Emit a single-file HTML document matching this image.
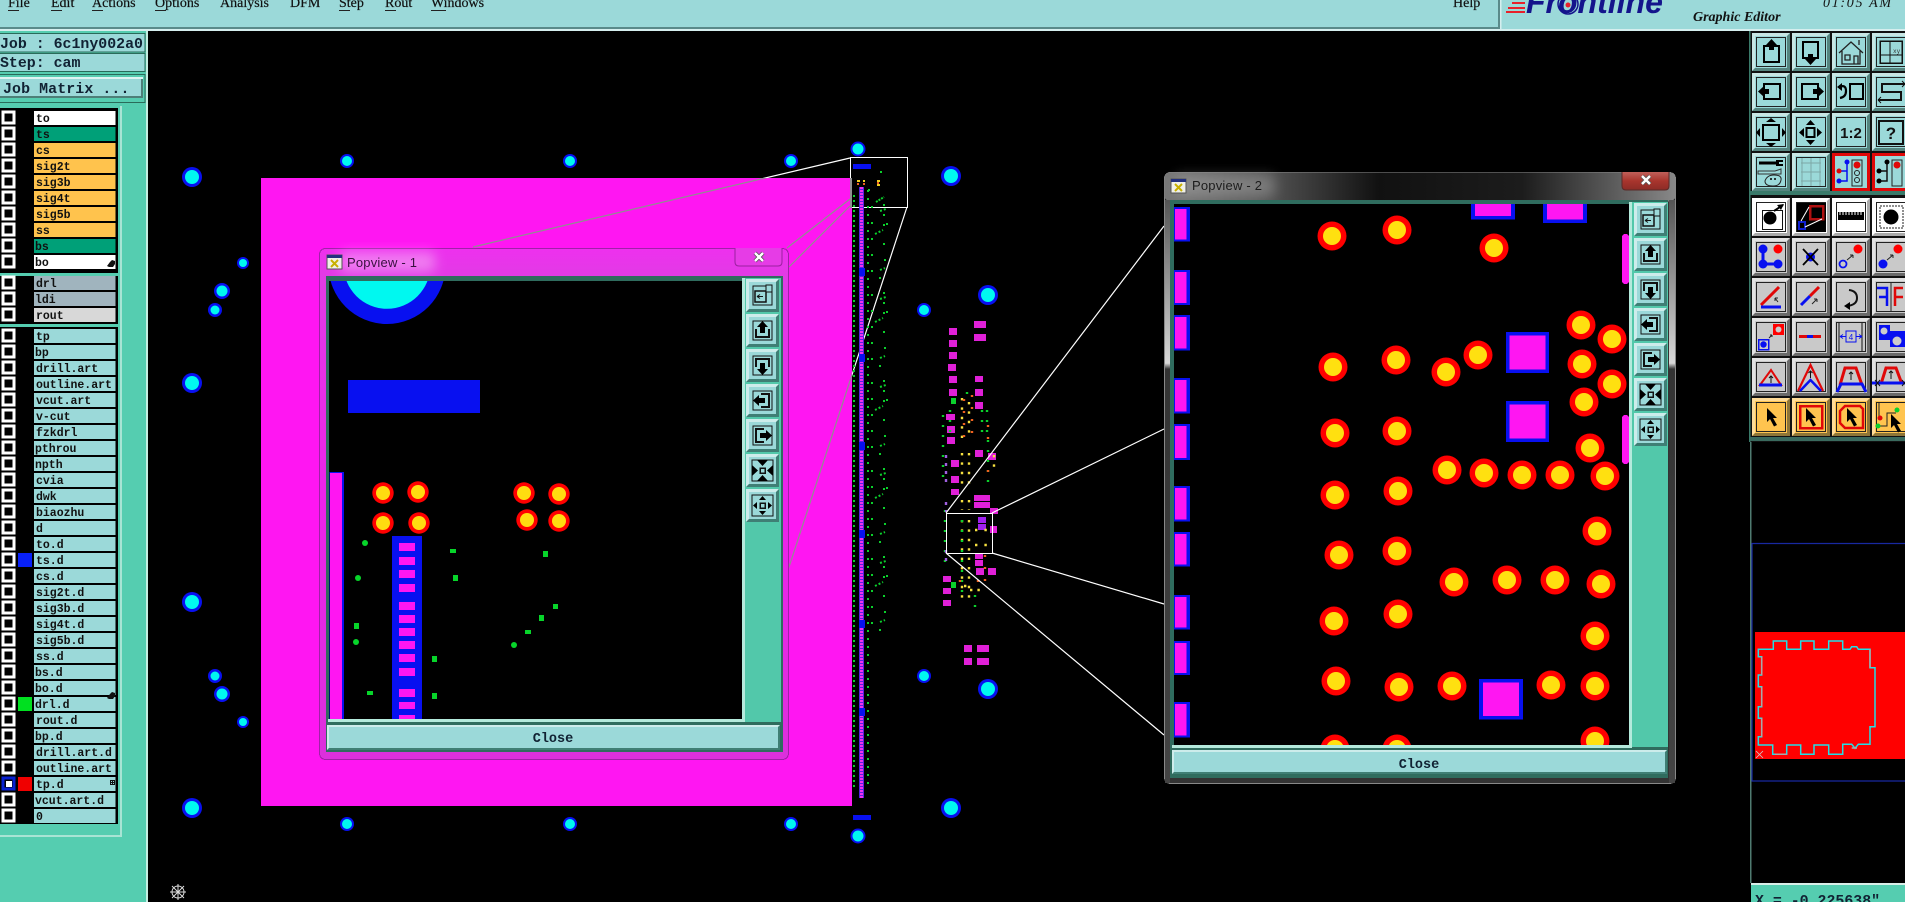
<!DOCTYPE html>
<html><head><meta charset="utf-8"><title>Frontline Graphic Editor</title>
<style>
html,body{margin:0;padding:0;background:#000;width:1905px;height:902px;overflow:hidden}
svg{display:block;position:absolute;left:0;top:0}
.m{font:bold 11.5px "Liberation Mono",monospace;fill:#111}
.j{font:bold 14.9px "Liberation Mono",monospace;fill:#123}
.s{font:14px "Liberation Serif",serif;fill:#111;stroke:#111;stroke-width:.2}
.t{font:13px "Liberation Sans",sans-serif;letter-spacing:.2px}
rect{shape-rendering:crispEdges}
</style></head><body>
<svg width="1905" height="902" viewBox="0 0 1905 902" xmlns="http://www.w3.org/2000/svg">
<defs>
<linearGradient id="gp" x1="0" y1="0" x2="0" y2="1"><stop offset="0" stop-color="#ee30ee"/><stop offset=".06" stop-color="#e03ce4"/><stop offset=".5" stop-color="#ec22ea"/><stop offset="1" stop-color="#dc30dc"/></linearGradient>
<linearGradient id="gd" x1="0" y1="0" x2="1" y2="0"><stop offset="0" stop-color="#777"/><stop offset=".18" stop-color="#5a5a5a"/><stop offset=".42" stop-color="#111"/><stop offset=".7" stop-color="#1c1c1c"/><stop offset=".92" stop-color="#6a6a6a"/><stop offset="1" stop-color="#888"/></linearGradient>
<linearGradient id="gs" x1="0" y1="0" x2="0" y2="1"><stop offset="0" stop-color="#555"/><stop offset=".28" stop-color="#d8d8d8"/><stop offset=".29" stop-color="#333"/><stop offset="1" stop-color="#444"/></linearGradient>
<linearGradient id="gr" x1="0" y1="0" x2="0" y2="1"><stop offset="0" stop-color="#c0605a"/><stop offset=".5" stop-color="#a8352d"/><stop offset="1" stop-color="#8c2c26"/></linearGradient>
<filter id="bl" x="-20%" y="-50%" width="140%" height="200%"><feGaussianBlur stdDeviation="6"/></filter>
<clipPath id="cp1"><rect x="329" y="281" width="413" height="438"/></clipPath>
<clipPath id="cp2"><rect x="1174" y="204" width="455" height="541"/></clipPath>
<clipPath id="cpk"><rect x="261" y="178" width="591" height="628"/></clipPath>
<g id="p1"><circle r="10.7" fill="#f00"/><circle r="7" fill="#ffdc10"/></g>
<g id="p2"><circle r="14.5" fill="#f00"/><circle r="9" fill="#ffe010"/></g>
<g id="bv"><path fill="#c8e6e4" d="M0 0H38L35 3H3V35L0 38Z"/><path fill="#55857f" d="M38 38H0L3 35H35V3L38 0Z"/><rect x="4.5" y="4.5" width="29" height="29" fill="none" stroke="#222"/></g>
<g id="Bt"><rect width="38" height="38" fill="#9bd9d9"/><use href="#bv"/></g>
<g id="Bg"><rect width="38" height="38" fill="#c9c9c9"/><path fill="#e2e2e2" d="M0 0H38L35 3H3V35L0 38Z"/><path fill="#6a6a6a" d="M38 38H0L3 35H35V3L38 0Z"/><rect x="4.5" y="4.5" width="29" height="29" fill="none" stroke="#222"/></g>
<g id="Bw"><rect width="38" height="38" fill="#fff"/><path fill="#aaa" d="M38 38H0L3 35H35V3L38 0Z"/><rect x="4.5" y="4.5" width="29" height="29" fill="none" stroke="#222"/></g>
<g id="Bo"><rect width="38" height="38" fill="#ffc44f"/><path fill="#ffdc98" d="M0 0H38L35 3H3V35L0 38Z"/><path fill="#8f7638" d="M38 38H0L3 35H35V3L38 0Z"/><rect x="4.5" y="4.5" width="29" height="29" fill="none" stroke="#222"/></g>
<path id="ar" d="M0 0L10 10H6L10 17L7 18.500L3 11L0 14Z" fill="#000"/>
<g id="Pb"><rect width="33" height="33" fill="#9bd9d9"/><path fill="#cdeceb" d="M0 0H33L30 3H3V30L0 33Z"/><path fill="#3f7f75" d="M33 33H0L3 30H30V3L33 0Z"/></g>
<g id="pu"><rect x="7" y="7" width="19" height="19" fill="none" stroke="#111"/><path d="M10 15v8h13v-8" fill="none" stroke="#111" stroke-width="2"/><path d="M16.500 7L22 13H19V19H14V13H11Z" fill="#000"/></g>
<g id="pbs">
<use href="#Pb"/><g><rect x="7" y="7" width="19" height="19" fill="none" stroke="#111"/><path d="M9 12h11v11H9z" fill="none" stroke="#111" stroke-width="1.500"/><path d="M20 6h6v7h-6z" fill="#9bd9d9" stroke="#111"/><path d="M11 17.500h6M11 17.500l3-2M11 17.500l3 2" stroke="#111" fill="none"/></g>
<g transform="translate(0 35)"><use href="#Pb"/><use href="#pu"/></g>
<g transform="translate(0 70)"><use href="#Pb"/><use href="#pu" transform="rotate(180 16.500 16.500)"/></g>
<g transform="translate(0 105)"><use href="#Pb"/><use href="#pu" transform="rotate(-90 16.500 16.500)"/></g>
<g transform="translate(0 140)"><use href="#Pb"/><use href="#pu" transform="rotate(90 16.500 16.500)"/></g>
<g transform="translate(0 175)"><use href="#Pb"/><rect x="6" y="6" width="21" height="21" fill="none" stroke="#111"/><rect x="14" y="14" width="5" height="5" fill="none" stroke="#111" stroke-width="1.500"/><path d="M11 6H22L16.500 12ZM11 27H22L16.500 21ZM6 11V22L12 16.500ZM27 11V22L21 16.500Z" fill="#000"/></g>
<g transform="translate(0 210)"><use href="#Pb"/><rect x="6" y="6" width="21" height="21" fill="none" stroke="#111"/><rect x="14" y="14" width="5" height="5" fill="none" stroke="#111" stroke-width="1.500"/><path d="M16.500 7L20 11H13ZM16.500 26L20 22H13ZM7 16.500L11 13V20ZM26 16.500L22 13V20Z" fill="#000"/></g>
</g>
<g id="tile" fill="none" stroke="#0bd02c" stroke-width="2">
<path stroke-dasharray="2 2" d="M875 34l8-4M880 11l6-2M880 70l5-2"/>
<path stroke-dasharray="2 8" d="M884 4v26"/>
<path stroke-dasharray="2 14" d="M872 6v80"/>
<path d="M883 44h2M884 60h2M879 78h2M886 24h2"/>
</g>
</defs>

<!-- canvas -->
<rect width="1905" height="902" fill="#000"/>

<!-- zoom rect 1 + lines (white parts, over black) -->
<g fill="none" stroke="#fff" stroke-width="1.200">
<rect x="850.500" y="157.500" width="57" height="50"/>
<path d="M850 158L473 247M850 199L787 248M850 206L789 267M907 207L788 570"/>
</g>
<rect x="261" y="178" width="591" height="628" fill="#ff16f2"/>
<g fill="none" stroke="#8f8f8f" stroke-width="1.200" clip-path="url(#cpk)"><path d="M850 158L473 247M850 199L787 248M850 206L789 267M907 207L788 570"/></g>
<rect x="850" y="178" width="2" height="30" fill="#8f8f8f"/>

<!-- drill pads -->
<g fill="#0810f0">
<circle cx="192" cy="177" r="10"/><circle cx="192" cy="383" r="10"/><circle cx="192" cy="602" r="10"/><circle cx="192" cy="808" r="10"/><circle cx="951" cy="176" r="10"/><circle cx="988" cy="295" r="10"/><circle cx="988" cy="689" r="10"/><circle cx="951" cy="808" r="10"/>
<circle cx="347" cy="161" r="7"/><circle cx="570" cy="161" r="7"/><circle cx="791" cy="161" r="7"/><circle cx="858" cy="149" r="7.500"/><circle cx="858" cy="836" r="7.500"/><circle cx="347" cy="824" r="7"/><circle cx="570" cy="824" r="7"/><circle cx="791" cy="824" r="7"/>
<circle cx="222" cy="291" r="8"/><circle cx="215" cy="310" r="7"/><circle cx="243" cy="263" r="6"/><circle cx="215" cy="676" r="7"/><circle cx="222" cy="694" r="8"/><circle cx="243" cy="722" r="6"/><circle cx="924" cy="310" r="7"/><circle cx="924" cy="676" r="7"/>
</g>
<g fill="#00f8f0">
<circle cx="192" cy="177" r="7"/><circle cx="192" cy="383" r="7"/><circle cx="192" cy="602" r="7"/><circle cx="192" cy="808" r="7"/><circle cx="951" cy="176" r="7"/><circle cx="988" cy="295" r="7"/><circle cx="988" cy="689" r="7"/><circle cx="951" cy="808" r="7"/>
<circle cx="347" cy="161" r="5"/><circle cx="570" cy="161" r="5"/><circle cx="791" cy="161" r="5"/><circle cx="858" cy="149" r="5.500"/><circle cx="858" cy="836" r="5.500"/><circle cx="347" cy="824" r="5"/><circle cx="570" cy="824" r="5"/><circle cx="791" cy="824" r="5"/>
<circle cx="222" cy="291" r="5.500"/><circle cx="215" cy="310" r="4.500"/><circle cx="243" cy="263" r="4"/><circle cx="215" cy="676" r="4.500"/><circle cx="222" cy="694" r="5.500"/><circle cx="243" cy="722" r="4"/><circle cx="924" cy="310" r="5"/><circle cx="924" cy="676" r="5"/>
</g>

<!-- strip -->
<rect x="853" y="164" width="18" height="5" fill="#0810f0"/><rect x="853" y="815" width="18" height="5" fill="#0810f0"/>
<rect x="859" y="187" width="5" height="611" fill="#5a20e0"/>
<line x1="861.500" y1="187" x2="861.500" y2="798" stroke="#f030f0" stroke-width="3" stroke-dasharray="2 1"/>
<g fill="#0810f0"><rect x="859" y="268" width="6" height="8"/><rect x="859" y="354" width="6" height="8"/><rect x="859" y="442" width="6" height="8"/><rect x="859" y="530" width="6" height="8"/><rect x="859" y="620" width="6" height="8"/><rect x="859" y="708" width="6" height="8"/></g>
<g fill="none" stroke-width="2">
<path stroke="#0bd02c" stroke-dasharray="2 3" d="M854 195V790"/>
<path stroke="#0bd02c" stroke-dasharray="2 6" d="M868 190V790"/>
<path stroke="#f0d020" stroke-dasharray="3 3" d="M857 181h8M877 181h6M877 185h6"/>
<path stroke="#f06020" stroke-dasharray="2 4" d="M857 184h8M877 183h6"/>
</g>
<g fill="none" stroke="#0bd02c" stroke-width="2"><path stroke-dasharray="2 1" d="M876 202l8-5"/><path d="M880 172h2M868 190h2"/></g>
<use href="#tile" y="200"/><use href="#tile" y="288"/><use href="#tile" y="376"/><use href="#tile" y="464"/><use href="#tile" y="552"/>

<!-- center cluster -->
<g fill="#e020d8">
<rect x="949" y="328" width="8" height="7"/><rect x="949" y="340" width="8" height="7"/><rect x="949" y="352" width="8" height="7"/><rect x="948" y="364" width="8" height="7"/><rect x="949" y="376" width="8" height="7"/><rect x="949" y="389" width="8" height="7"/><rect x="946" y="414" width="9" height="6"/><rect x="947" y="426" width="8" height="7"/><rect x="947" y="437" width="8" height="7"/><rect x="951" y="460" width="8" height="7"/><rect x="951" y="476" width="8" height="7"/><rect x="951" y="489" width="8" height="6"/><rect x="975" y="376" width="8" height="6"/><rect x="975" y="389" width="8" height="7"/><rect x="975" y="402" width="8" height="7"/><rect x="975" y="450" width="8" height="7"/><rect x="988" y="453" width="8" height="7"/><rect x="974" y="495" width="8" height="6"/><rect x="982" y="495" width="8" height="6"/><rect x="974" y="502" width="8" height="6"/><rect x="982" y="502" width="8" height="6"/><rect x="990" y="508" width="8" height="6"/><rect x="990" y="526" width="7" height="7"/><rect x="975" y="553" width="8" height="6"/><rect x="975" y="560" width="8" height="6"/><rect x="976" y="568" width="8" height="7"/><rect x="988" y="568" width="8" height="7"/><rect x="943" y="576" width="8" height="6"/><rect x="943" y="588" width="8" height="6"/><rect x="943" y="600" width="8" height="6"/>
<rect x="974" y="321" width="12" height="7"/><rect x="974" y="334" width="12" height="7"/><rect x="964" y="645" width="8" height="7"/><rect x="977" y="645" width="12" height="7"/><rect x="964" y="658" width="8" height="7"/><rect x="977" y="658" width="12" height="7"/>
</g>
<rect x="978" y="517" width="8" height="6" fill="#a020f0"/><rect x="978" y="524" width="8" height="6" fill="#a020f0"/>
<rect x="951" y="398" width="5" height="6" fill="#0bd02c"/><rect x="951" y="582" width="5" height="6" fill="#0bd02c"/>
<g fill="none" stroke-width="2.400">
<path stroke="#f6e040" stroke-dasharray="2.400 7" d="M962 398V438M969 402V438M962 453V486M969 453V486M962 500V510M969 500V510M962 520V600M969 520V600M994 455V470M975 530h16M975 545h16"/>
<path stroke="#0bd02c" stroke-dasharray="2 8" d="M943 415V480M945 510V570M950 410V435M967 392V400M982 410V440M987 410V440M988 440V482M975 595V612M962 520V595"/>
<path stroke="#a060e0" stroke-dasharray="3 5" d="M946 455V482M946 502V512M946 550V565"/>
<path stroke="#f06020" stroke-dasharray="2 10" d="M964 399V440M972 395V440M988 425V445M988 470V476M960 580V590M978 580V590M985 555V590"/>
<path stroke="#f6e040" stroke-dasharray="2.400 5" d="M970 590h14M964 586h6"/>
</g>
<g fill="none" stroke="#fff" stroke-width="1.200">
<rect x="946.500" y="513.500" width="46" height="40"/>
<path d="M946 513L1164 226M992 513L1164 429M992 553L1164 604M946 553L1164 735"/>
</g>

<!-- crosshair -->
<g fill="none" stroke="#ddd"><circle cx="178" cy="892" r="6"/><path d="M170 892h16M178 884v16M172 886l12 12M184 886l-12 12"/></g>

<!-- top bar -->
<rect width="1905" height="31" fill="#9bd9d9"/>
<rect y="27" width="1500" height="2" fill="#5a8a8a"/><rect y="29" width="1905" height="2" fill="#d5eeee"/>
<rect x="1498" y="0" width="2" height="28" fill="#5a8a8a"/><rect x="1500" y="0" width="1.500" height="30" fill="#d5eeee"/>
<text class="s" x="8" y="7">File</text><text class="s" x="51" y="7">Edit</text><text class="s" x="92" y="7">Actions</text><text class="s" x="155" y="7">Options</text><text class="s" x="220" y="7">Analysis</text><text class="s" x="290" y="7">DFM</text><text class="s" x="339" y="7">Step</text><text class="s" x="385" y="7">Rout</text><text class="s" x="431" y="7">Windows</text><text class="s" x="1453" y="7">Help</text>
<g fill="#222"><rect x="8" y="10" width="11" height="1"/><rect x="51" y="10" width="11" height="1"/><rect x="92" y="10" width="11" height="1"/><rect x="155" y="10" width="11" height="1"/><rect x="339" y="10" width="11" height="1"/><rect x="385" y="10" width="11" height="1"/><rect x="431" y="10" width="15" height="1"/></g>
<!-- logo -->
<g fill="#e8202a"><rect x="1512" y="2" width="13" height="2"/><rect x="1508" y="7" width="17" height="2"/><rect x="1506" y="11" width="19" height="2"/></g>
<text x="1526" y="13" style="font:italic bold 32px 'Liberation Sans',sans-serif;fill:#14148c">Frontline</text>
<circle cx="1568" cy="4" r="10" fill="none" stroke="#14148c" stroke-width="1.500"/>
<circle cx="1568" cy="5" r="2.500" fill="#e8202a"/>
<text x="1693" y="21" style="font:italic bold 14px 'Liberation Serif',serif;fill:#111">Graphic Editor</text>
<text x="1823" y="7" style="font:italic 14px 'Liberation Serif',serif;letter-spacing:1.700px;fill:#111">01:05 AM</text>

<!-- left panel -->
<rect y="31" width="146" height="871" fill="#55cdb0"/><rect x="146" y="31" width="2" height="871" fill="#c4eee2"/>
<rect x="-2" y="33.500" width="147" height="18.500" fill="#9bd9d9" stroke="#2a6b5a"/>
<rect x="-2" y="53.500" width="147" height="18" fill="#9bd9d9" stroke="#2a6b5a"/>
<text class="j" x="0" y="48">Job : 6c1ny002a0</text>
<text class="j" x="0" y="67">Step: cam</text>
<rect x="-2" y="74.500" width="147" height="28" fill="#55cdb0" stroke="#2a6b5a"/>
<rect x="0" y="77" width="143" height="21" fill="#9bd9d9"/><path d="M0 77H143V79H0Z" fill="#dff5f3"/><path d="M0 96H141V79H143V98H0Z" fill="#4d7f78"/>
<text class="j" x="3" y="93" style="letter-spacing:.1px">Job Matrix ...</text>
<rect x="120" y="106" width="2" height="730" fill="#a8e4d4"/><rect x="0" y="835" width="122" height="2" fill="#a8e4d4"/>
<rect x="0" y="108" width="118" height="165" fill="#000"/><rect x="0" y="276" width="118" height="48" fill="#000"/><rect x="0" y="327" width="118" height="497" fill="#000"/>

<g id="rows">
<rect x="34" y="111" width="81.500" height="14" fill="#fff"/><text class="m" x="36" y="122">to</text>
<rect x="34" y="127" width="81.500" height="14" fill="#00a078"/><text class="m" x="36" y="138">ts</text>
<rect x="34" y="143" width="81.500" height="14" fill="#ffc34d"/><text class="m" x="36" y="154">cs</text>
<rect x="34" y="159" width="81.500" height="14" fill="#ffc34d"/><text class="m" x="36" y="170">sig2t</text>
<rect x="34" y="175" width="81.500" height="14" fill="#ffc34d"/><text class="m" x="36" y="186">sig3b</text>
<rect x="34" y="191" width="81.500" height="14" fill="#ffc34d"/><text class="m" x="36" y="202">sig4t</text>
<rect x="34" y="207" width="81.500" height="14" fill="#ffc34d"/><text class="m" x="36" y="218">sig5b</text>
<rect x="34" y="223" width="81.500" height="14" fill="#ffc34d"/><text class="m" x="36" y="234">ss</text>
<rect x="34" y="239" width="81.500" height="14" fill="#00a078"/><text class="m" x="35" y="250">bs</text>
<rect x="34" y="255" width="81.500" height="14" fill="#fff"/><text class="m" x="35" y="266">bo</text>
<rect x="34" y="276" width="81.500" height="14" fill="#a0b4be"/><text class="m" x="36" y="287">drl</text>
<rect x="34" y="292" width="81.500" height="14" fill="#a0b4be"/><text class="m" x="35" y="303">ldi</text>
<rect x="34" y="308" width="81.500" height="14" fill="#d8d8d8"/><text class="m" x="36" y="319">rout</text>
</g>
<g fill="#9bd9d9">
<rect x="34" y="329" width="81.500" height="14"/><rect x="34" y="345" width="81.500" height="14"/><rect x="34" y="361" width="81.500" height="14"/><rect x="34" y="377" width="81.500" height="14"/><rect x="34" y="393" width="81.500" height="14"/><rect x="34" y="409" width="81.500" height="14"/><rect x="34" y="425" width="81.500" height="14"/><rect x="34" y="441" width="81.500" height="14"/><rect x="34" y="457" width="81.500" height="14"/><rect x="34" y="473" width="81.500" height="14"/><rect x="34" y="489" width="81.500" height="14"/><rect x="34" y="505" width="81.500" height="14"/><rect x="34" y="521" width="81.500" height="14"/><rect x="34" y="537" width="81.500" height="14"/><rect x="34" y="553" width="81.500" height="14"/><rect x="34" y="569" width="81.500" height="14"/><rect x="34" y="585" width="81.500" height="14"/><rect x="34" y="601" width="81.500" height="14"/><rect x="34" y="617" width="81.500" height="14"/><rect x="34" y="633" width="81.500" height="14"/><rect x="34" y="649" width="81.500" height="14"/><rect x="34" y="665" width="81.500" height="14"/><rect x="34" y="681" width="81.500" height="14"/><rect x="34" y="697" width="81.500" height="14"/><rect x="34" y="713" width="81.500" height="14"/><rect x="34" y="729" width="81.500" height="14"/><rect x="34" y="745" width="81.500" height="14"/><rect x="34" y="761" width="81.500" height="14"/><rect x="34" y="777" width="81.500" height="14"/><rect x="34" y="793" width="81.500" height="14"/><rect x="34" y="809" width="81.500" height="14"/>
</g>
<g>
<text class="m" x="36" y="340">tp</text><text class="m" x="35" y="356">bp</text><text class="m" x="36" y="372">drill.art</text><text class="m" x="36" y="388">outline.art</text><text class="m" x="36" y="404">vcut.art</text><text class="m" x="36" y="420">v-cut</text><text class="m" x="36" y="436">fzkdrl</text><text class="m" x="35" y="452">pthrou</text><text class="m" x="35" y="468">npth</text><text class="m" x="36" y="484">cvia</text><text class="m" x="36" y="500">dwk</text><text class="m" x="36" y="516">biaozhu</text><text class="m" x="36" y="532">d</text><text class="m" x="36" y="548">to.d</text><text class="m" x="36" y="564">ts.d</text><text class="m" x="36" y="580">cs.d</text><text class="m" x="36" y="596">sig2t.d</text><text class="m" x="36" y="612">sig3b.d</text><text class="m" x="36" y="628">sig4t.d</text><text class="m" x="36" y="644">sig5b.d</text><text class="m" x="36" y="660">ss.d</text><text class="m" x="35" y="676">bs.d</text><text class="m" x="35" y="692">bo.d</text><text class="m" x="35" y="708">drl.d</text><text class="m" x="36" y="724">rout.d</text><text class="m" x="35" y="740">bp.d</text><text class="m" x="36" y="756">drill.art.d</text><text class="m" x="36" y="772">outline.art</text><text class="m" x="36" y="788">tp.d</text><text class="m" x="35" y="804">vcut.art.d</text><text class="m" x="36" y="820">0</text>
</g>
<rect x="18" y="553" width="14" height="14" fill="#0820f8"/><rect x="18" y="697" width="14" height="14" fill="#00e020"/><rect x="18" y="777" width="14" height="14" fill="#f00000"/>
<path d="M107 266l3-4 2-2 3 1v3l-2 3h-4z" fill="#111"/><path d="M107 698l3-4 2-2 3 1v3l-2 3h-4z" fill="#111"/>
<g fill="none" stroke="#111"><rect x="110.500" y="780.500" width="4" height="4"/><path d="M112.500 780v4M110 782.500h4"/></g>
<!-- checkboxes -->
<g fill="none" stroke="#fff" stroke-width="2.600">
<rect x="3" y="112" width="11" height="11"/><rect x="3" y="128" width="11" height="11"/><rect x="3" y="144" width="11" height="11"/><rect x="3" y="160" width="11" height="11"/><rect x="3" y="176" width="11" height="11"/><rect x="3" y="192" width="11" height="11"/><rect x="3" y="208" width="11" height="11"/><rect x="3" y="224" width="11" height="11"/><rect x="3" y="240" width="11" height="11"/><rect x="3" y="256" width="11" height="11"/>
<rect x="3" y="277" width="11" height="11"/><rect x="3" y="293" width="11" height="11"/><rect x="3" y="309" width="11" height="11"/>
<rect x="3" y="330" width="11" height="11"/><rect x="3" y="346" width="11" height="11"/><rect x="3" y="362" width="11" height="11"/><rect x="3" y="378" width="11" height="11"/><rect x="3" y="394" width="11" height="11"/><rect x="3" y="410" width="11" height="11"/><rect x="3" y="426" width="11" height="11"/><rect x="3" y="442" width="11" height="11"/><rect x="3" y="458" width="11" height="11"/><rect x="3" y="474" width="11" height="11"/><rect x="3" y="490" width="11" height="11"/><rect x="3" y="506" width="11" height="11"/><rect x="3" y="522" width="11" height="11"/><rect x="3" y="538" width="11" height="11"/><rect x="3" y="554" width="11" height="11"/><rect x="3" y="570" width="11" height="11"/><rect x="3" y="586" width="11" height="11"/><rect x="3" y="602" width="11" height="11"/><rect x="3" y="618" width="11" height="11"/><rect x="3" y="634" width="11" height="11"/><rect x="3" y="650" width="11" height="11"/><rect x="3" y="666" width="11" height="11"/><rect x="3" y="682" width="11" height="11"/><rect x="3" y="698" width="11" height="11"/><rect x="3" y="714" width="11" height="11"/><rect x="3" y="730" width="11" height="11"/><rect x="3" y="746" width="11" height="11"/><rect x="3" y="762" width="11" height="11"/><rect x="3" y="794" width="11" height="11"/><rect x="3" y="810" width="11" height="11"/>
</g>
<rect x="3" y="778" width="11" height="11" fill="#000" stroke="#0820d0" stroke-width="2.600"/><rect x="6" y="781" width="6" height="6" fill="#fff"/>

<!-- POPUP 1 -->
<rect x="319.500" y="248.500" width="469" height="511" rx="6" fill="url(#gp)" stroke="#a020a8"/>
<rect x="340" y="252" width="95" height="20" fill="#fff" opacity=".35" filter="url(#bl)" rx="5"/>
<path d="M735 248V262q0 4 4 4h39q4 0 4-4V248" fill="#e63ce6" stroke="#9a20a0"/>
<path d="M755 253l8 8M763 253l-8 8" stroke="#555" stroke-width="4"/><path d="M755 253l8 8M763 253l-8 8" stroke="#fff" stroke-width="2.400"/>
<g><rect x="327" y="255" width="15" height="14" fill="#f0f0e8" stroke="#555"/><rect x="327" y="255" width="15" height="3" fill="#223080"/><path d="M331 260l7 7M338 260l-7 7" stroke="#c8b000" stroke-width="2"/></g>
<text class="t" x="347" y="267" fill="#3a1040">Popview - 1</text>
<rect x="326" y="276" width="457" height="476" fill="#2f6c5e"/>
<rect x="329" y="281" width="413" height="438" fill="#000"/>
<rect x="742" y="278" width="3" height="444" fill="#b4eadc"/>
<rect x="328" y="719" width="417" height="3" fill="#b4eadc"/>
<rect x="745" y="278" width="36" height="444" fill="#52c8aa"/>
<use href="#pbs" x="746" y="279"/>
<rect x="327" y="725" width="453" height="25" fill="#9bd9d9"/><path d="M327 725H780L778 727H329V748L327 750Z" fill="#cdeceb"/><path d="M780 750H327L329 748H778V727L780 725Z" fill="#3f7f75"/>
<text class="j" x="553" y="742" text-anchor="middle" style="font-size:13.500px">Close</text>
<g clip-path="url(#cp1)">
<circle cx="387" cy="265.500" r="58.500" fill="#0810f0"/><circle cx="387" cy="265.500" r="43.300" fill="#00f8f0"/>
<rect x="348" y="380" width="132" height="33" fill="#0810f0"/>
<rect x="329.500" y="472" width="14.500" height="247" fill="#0810f0"/><rect x="330" y="473" width="12" height="246" fill="#ff16f2"/>
<use href="#p1" x="383" y="493"/><use href="#p1" x="418" y="492"/><use href="#p1" x="383" y="523"/><use href="#p1" x="419" y="523"/><use href="#p1" x="524" y="493"/><use href="#p1" x="559" y="494"/><use href="#p1" x="527" y="520"/><use href="#p1" x="559" y="521"/>
<rect x="392" y="536" width="30" height="183" fill="#0810f0"/>
<g fill="#ff16f2"><rect x="399" y="543" width="16" height="8"/><rect x="399" y="557" width="16" height="8"/><rect x="399" y="570" width="16" height="8"/><rect x="399" y="584" width="16" height="8"/><rect x="399" y="602" width="16" height="8"/><rect x="399" y="615" width="16" height="8"/><rect x="399" y="628" width="16" height="8"/><rect x="399" y="641" width="16" height="8"/><rect x="399" y="654" width="16" height="8"/><rect x="399" y="668" width="16" height="8"/><rect x="399" y="689" width="16" height="8"/><rect x="399" y="702" width="16" height="7"/><rect x="399" y="715" width="16" height="5"/></g>
<g fill="#07d52a"><circle cx="365" cy="543" r="3"/><circle cx="358" cy="578" r="3"/><circle cx="356" cy="642" r="3"/><circle cx="514" cy="645" r="3"/><rect x="354" y="623" width="5" height="6"/><rect x="367" y="691" width="6" height="4"/><rect x="450" y="549" width="6" height="4"/><rect x="453" y="575" width="5" height="6"/><rect x="432" y="656" width="5" height="6"/><rect x="432" y="693" width="5" height="6"/><rect x="543" y="551" width="5" height="6"/><rect x="553" y="604" width="5" height="5"/><rect x="539" y="615" width="5" height="6"/><rect x="525" y="630" width="6" height="4"/></g>
</g>

<!-- POPUP 2 -->
<rect x="1164.500" y="172.500" width="511" height="611" rx="6" fill="#333" stroke="#888"/>
<rect x="1164.500" y="172.500" width="511" height="29" rx="6" fill="url(#gd)"/>
<rect x="1165" y="200" width="5" height="583" fill="url(#gs)"/><rect x="1669" y="200" width="6" height="583" fill="url(#gs)"/>
<rect x="1175" y="175" width="100" height="22" fill="#ccc" opacity=".3" filter="url(#bl)" rx="6"/>
<path d="M1622 172V186q0 4 4 4h39q4 0 4-4V172" fill="url(#gr)" stroke="#5a2a28"/>
<path d="M1642 176l8 8M1650 176l-8 8" stroke="#555" stroke-width="4"/><path d="M1642 176l8 8M1650 176l-8 8" stroke="#fff" stroke-width="2.400"/>
<g><rect x="1171" y="179" width="15" height="14" fill="#f0f0e8" stroke="#555"/><rect x="1171" y="179" width="15" height="3" fill="#223080"/><path d="M1175 184l7 7M1182 184l-7 7" stroke="#c8b000" stroke-width="2"/></g>
<text class="t" x="1192" y="190" fill="#1c1c1c">Popview - 2</text>
<rect x="1170" y="200" width="498" height="578" fill="#2f6c5e"/>
<rect x="1174" y="204" width="455" height="541" fill="#000"/>
<rect x="1629" y="202" width="3" height="545" fill="#b4eadc"/>
<rect x="1172" y="745" width="460" height="3" fill="#b4eadc"/>
<rect x="1632" y="202" width="36" height="545" fill="#52c8aa"/>
<use href="#pbs" x="1634" y="203"/>
<rect x="1172" y="750" width="495" height="24" fill="#9bd9d9"/><path d="M1172 750H1667L1665 752H1174V772L1172 774Z" fill="#cdeceb"/><path d="M1667 774H1172L1174 772H1665V752L1667 750Z" fill="#3f7f75"/>
<text class="j" x="1419" y="768" text-anchor="middle" style="font-size:13.500px">Close</text>
<g clip-path="url(#cp2)">
<g fill="#0810f0"><rect x="1174" y="207" width="16" height="34.500"/><rect x="1174" y="270" width="16" height="35"/><rect x="1174" y="315" width="16" height="35.500"/><rect x="1174" y="378" width="16" height="35.500"/><rect x="1174" y="424" width="16" height="36"/><rect x="1174" y="486" width="16" height="35.500"/><rect x="1174" y="532" width="16" height="34.500"/><rect x="1174" y="595" width="16" height="34.500"/><rect x="1174" y="641" width="16" height="34"/><rect x="1174" y="702" width="16" height="35.500"/><rect x="1471" y="204" width="44" height="15.500"/><rect x="1543" y="204" width="44" height="19"/><rect x="1506" y="332" width="43" height="41"/><rect x="1506" y="401" width="43" height="41"/><rect x="1479" y="679" width="44" height="40.500"/></g>
<g fill="#ff16f2"><rect x="1175" y="209" width="11.500" height="30.500"/><rect x="1175" y="272" width="11.500" height="31"/><rect x="1175" y="317" width="11.500" height="31.500"/><rect x="1175" y="380" width="11.500" height="31.500"/><rect x="1175" y="426" width="11.500" height="32"/><rect x="1175" y="488" width="11.500" height="31.500"/><rect x="1175" y="534" width="11.500" height="30.500"/><rect x="1175" y="597" width="11.500" height="30.500"/><rect x="1175" y="643" width="11.500" height="30"/><rect x="1175" y="704" width="11.500" height="31.500"/><rect x="1475" y="204" width="36" height="12"/><rect x="1547" y="204" width="36" height="15.500"/><rect x="1509.500" y="335.500" width="36" height="34"/><rect x="1509.500" y="404.500" width="36" height="34"/><rect x="1483" y="682.500" width="36" height="33.500"/></g>
<rect x="1622" y="234" width="7" height="50" rx="3" fill="#ff16f2"/><rect x="1622" y="415" width="7" height="49" rx="3" fill="#ff16f2"/>
<use href="#p2" x="1332" y="236"/><use href="#p2" x="1397" y="230"/><use href="#p2" x="1494" y="248"/><use href="#p2" x="1581" y="325"/><use href="#p2" x="1612" y="339"/><use href="#p2" x="1582" y="364"/><use href="#p2" x="1612" y="384"/><use href="#p2" x="1478" y="355"/><use href="#p2" x="1446" y="372"/><use href="#p2" x="1396" y="360"/><use href="#p2" x="1333" y="367"/><use href="#p2" x="1584" y="402"/><use href="#p2" x="1335" y="433"/><use href="#p2" x="1397" y="431"/><use href="#p2" x="1590" y="448"/><use href="#p2" x="1447" y="470"/><use href="#p2" x="1484" y="473"/><use href="#p2" x="1522" y="475"/><use href="#p2" x="1560" y="475"/><use href="#p2" x="1605" y="476"/><use href="#p2" x="1335" y="495"/><use href="#p2" x="1398" y="491"/><use href="#p2" x="1597" y="531"/><use href="#p2" x="1339" y="555"/><use href="#p2" x="1397" y="551"/><use href="#p2" x="1454" y="582"/><use href="#p2" x="1507" y="580"/><use href="#p2" x="1555" y="580"/><use href="#p2" x="1601" y="584"/><use href="#p2" x="1334" y="621"/><use href="#p2" x="1398" y="614"/><use href="#p2" x="1595" y="636"/><use href="#p2" x="1336" y="681"/><use href="#p2" x="1399" y="687"/><use href="#p2" x="1452" y="686"/><use href="#p2" x="1551" y="685"/><use href="#p2" x="1595" y="686"/><use href="#p2" x="1335" y="749"/><use href="#p2" x="1397" y="749"/><use href="#p2" x="1595" y="741"/>
</g>

<!-- RIGHT TOOLBAR -->
<rect x="1749" y="31" width="156" height="411" fill="#111"/>
<rect x="1749" y="31" width="1.500" height="411" fill="#3a7a6a"/>
<rect x="1750" y="191" width="155" height="4" fill="#3a7a6a"/>
<rect x="1750" y="437" width="155" height="4" fill="#3a6a5e"/>

<g transform="translate(1752 33)"><use href="#Bt"/><rect x="12" y="13" width="15" height="16" fill="none" stroke="#000" stroke-width="2"/><path d="M19.500 6L25 12H22V17H17V12H14Z"/></g>
<g transform="translate(1792 33)"><use href="#Bt"/><rect x="11" y="9" width="15" height="16" fill="none" stroke="#000" stroke-width="2"/><path d="M18.500 32L24 26H21V21H16V26H13Z"/></g>
<g transform="translate(1832 33)"><use href="#Bt"/><path d="M7 20L19 9L31 20M10 18V31H28V18M13 22h5v5h-5zM22 31V23h4v8M27 12V7" fill="none" stroke="#222" stroke-width="1.300"/></g>
<g transform="translate(1872 33)"><use href="#Bt"/><rect x="8" y="8" width="22" height="22" fill="none" stroke="#111" stroke-width="1.500"/><path d="M18 8V30M8 22H30" stroke="#111"/><text x="21" y="20" style="font:6px 'Liberation Mono',monospace;fill:#333">xy</text></g>

<g transform="translate(1752 73)"><use href="#Bt"/><rect x="12" y="11" width="16" height="15" fill="none" stroke="#000" stroke-width="2"/><path d="M6 18.500L12 13V16H17V21H12V24Z"/></g>
<g transform="translate(1792 73)"><use href="#Bt"/><rect x="10" y="11" width="16" height="15" fill="none" stroke="#000" stroke-width="2"/><path d="M32 18.500L26 13V16H21V21H26V24Z"/></g>
<g transform="translate(1832 73)"><use href="#Bt"/><rect x="18" y="11" width="13" height="15" fill="none" stroke="#000" stroke-width="2"/><path d="M7 14Q14 11 14 18Q14 24 8 25" fill="none" stroke="#000" stroke-width="2.200"/><path d="M10 10L5 14L10 18Z"/></g>
<g transform="translate(1872 73)"><use href="#Bt"/><path d="M33 11H10V19H29V27H6" fill="none" stroke="#111" stroke-width="2"/><path d="M33 11l-3-3M33 11l-3 3M6 27l3-3M6 27l3 3" stroke="#111" fill="none"/></g>

<g transform="translate(1752 113)"><use href="#Bt"/><rect x="11" y="12" width="16" height="15" fill="none" stroke="#000" stroke-width="2"/><path d="M19 5L24 9H14ZM19 34L24 30H14ZM4 19.500L8 15V24ZM34 19.500L30 15V24Z"/></g>
<g transform="translate(1792 113)"><use href="#Bt"/><rect x="14.500" y="15" width="8" height="9" fill="none" stroke="#000" stroke-width="2"/><path d="M18.500 7L23 12H14ZM18.500 32L23 27H14ZM7 19.500L12 15V24ZM30 19.500L25 15V24Z"/></g>
<g transform="translate(1832 113)"><use href="#Bt"/><text x="19" y="25" text-anchor="middle" style="font:bold 15px 'Liberation Sans',sans-serif;fill:#111">1:2</text></g>
<g transform="translate(1872 113)"><use href="#Bt"/><rect x="7" y="8" width="24" height="23" fill="none" stroke="#111" stroke-width="2"/><text x="19" y="26" text-anchor="middle" style="font:bold 17px 'Liberation Sans',sans-serif;fill:#111">?</text></g>

<g transform="translate(1752 153)"><use href="#Bt"/><path d="M7 10H24" stroke="#000" stroke-width="3"/><path d="M24 7h7v2h-4v2h4v2h-7z"/><path d="M6 18H23l6-2v5H6z" fill="none" stroke="#333"/><path d="M13 28q2-6 9-6q8 0 7 5q-1 6-8 6q-8 0-8-5z" fill="none" stroke="#222"/><circle cx="19" cy="26" r="1" /><circle cx="23" cy="26" r="1"/></g>
<g transform="translate(1792 153)"><use href="#Bt"/><path d="M9 10H29M9 19H29M9 28H29M10 5V33M19 5V33M28 5V33" stroke="#7ca8a6"/></g>
<g transform="translate(1832 153)"><use href="#Bt"/><rect x="1.500" y="1.500" width="35" height="35" fill="none" stroke="#e00808" stroke-width="3"/><rect x="4" y="4" width="30" height="30" fill="#9bd9d9"/><path d="M15 8V18H8M15 18V28H8" fill="none" stroke="#0810f0" stroke-width="1.500"/><circle cx="15" cy="9" r="2.500" fill="#0810f0"/><circle cx="7" cy="18" r="2.500" fill="#e00808"/><circle cx="7" cy="28" r="2.500" fill="#0810f0"/><rect x="20" y="7" width="10" height="26" fill="none" stroke="#222"/><circle cx="25" cy="12" r="3.500" fill="#e00808"/><circle cx="25" cy="20" r="2.500" fill="none" stroke="#222"/><circle cx="25" cy="27" r="2.500" fill="none" stroke="#222"/></g>
<g transform="translate(1872 153)"><use href="#Bt"/><rect x="1.500" y="1.500" width="35" height="35" fill="none" stroke="#e00808" stroke-width="3"/><rect x="4" y="4" width="30" height="30" fill="#9bd9d9"/><path d="M15 8V18H8M15 18V28H8" fill="none" stroke="#111" stroke-width="1.500"/><circle cx="15" cy="9" r="2.500" fill="#000"/><circle cx="7" cy="18" r="2.500" fill="#000"/><circle cx="7" cy="28" r="2.500" fill="#000"/><rect x="20" y="7" width="10" height="26" fill="none" stroke="#222"/><circle cx="25" cy="12" r="3.500" fill="#e00808"/></g>

<g transform="translate(1752 198)"><use href="#Bw"/><circle cx="18" cy="20" r="6.500"/><rect x="10.500" y="12.500" width="20" height="19" fill="none" stroke="#111"/><path d="M22 13L31 7" stroke="#000" stroke-width="2"/><path d="M32 6L25 7L29 12Z"/></g>
<g transform="translate(1792 198)"><use href="#Bw"/><rect x="5" y="5" width="29" height="29" fill="#000"/><rect x="18" y="8" width="13" height="13" fill="none" stroke="#b01010" stroke-width="2.500"/><rect x="7" y="24" width="6" height="7" fill="none" stroke="#1020d0" stroke-width="2"/><path d="M9 23L17 9M13 29L30 21" stroke="#fff"/></g>
<g transform="translate(1832 198)"><use href="#Bw"/><rect x="6" y="14" width="26" height="8"/><path d="M8 14v3M11 14v3M14 14v3M17 14v3M20 14v3M23 14v3M26 14v3M29 14v3" stroke="#fff"/></g>
<g transform="translate(1872 198)"><use href="#Bw"/><rect x="8" y="8" width="23" height="22" fill="none" stroke="#222" stroke-dasharray="2 1"/><circle cx="19" cy="19" r="7.500"/></g>

<g transform="translate(1752 238)"><use href="#Bg"/><path d="M11 11V26H26" fill="none" stroke="#0810f0" stroke-width="3"/><circle cx="11" cy="11" r="4.500" fill="#0810f0"/><circle cx="11" cy="26" r="4.500" fill="#0810f0"/><circle cx="26" cy="26" r="4.500" fill="#0810f0"/><circle cx="26" cy="11" r="4.500" fill="#f00"/></g>
<g transform="translate(1792 238)"><use href="#Bg"/><circle cx="18.500" cy="19" r="4.500" fill="#0810f0"/><path d="M11 11L26 27M26 11L11 27" stroke="#000" stroke-width="1.800"/></g>
<g transform="translate(1832 238)"><use href="#Bg"/><circle cx="11" cy="26" r="3.500" fill="none" stroke="#0810f0" stroke-width="1.800"/><circle cx="26" cy="11" r="4.500" fill="#f00"/><path d="M15 22L21 17M21 17h-3M21 17v3" stroke="#222" fill="none"/></g>
<g transform="translate(1872 238)"><use href="#Bg"/><circle cx="11" cy="26" r="4.500" fill="#0810f0"/><circle cx="26" cy="11" r="4.500" fill="#f00"/><path d="M15 22L21 17M21 17h-3M21 17v3" stroke="#222" fill="none"/></g>

<g transform="translate(1752 278)"><use href="#Bg"/><path d="M9 27L27 9" stroke="#e00808" stroke-width="3"/><path d="M9 29H29" stroke="#0810f0" stroke-width="3"/><path d="M26 24L23 20M23 20v3M23 20h3" stroke="#222" fill="none"/></g>
<g transform="translate(1792 278)"><use href="#Bg"/><path d="M9 27L18 18" stroke="#0810f0" stroke-width="3"/><path d="M18 18L27 9" stroke="#e00808" stroke-width="3"/><path d="M20 26L25 21M25 21h-3M25 21v3" stroke="#222" fill="none"/></g>
<g transform="translate(1832 278)"><use href="#Bg"/><path d="M17 12Q25 13 25 20Q25 27 15 28" fill="none" stroke="#111" stroke-width="2"/><path d="M18 24L12 28L18 32Z"/></g>
<g transform="translate(1872 278)"><use href="#Bg"/><path d="M5 10H15V28M7 19H15" fill="none" stroke="#0810f0" stroke-width="2.500"/><path d="M19 5V33" stroke="#222"/><path d="M31 10H23V28M23 19H31" fill="none" stroke="#e00808" stroke-width="2.500"/></g>

<g transform="translate(1752 318)"><use href="#Bg"/><rect x="21" y="6" width="11" height="11" fill="#f00"/><circle cx="26.500" cy="11.500" r="3" fill="#ccc"/><rect x="6.500" y="21.500" width="10" height="10" fill="none" stroke="#0810f0" stroke-width="1.500"/><circle cx="11.500" cy="26.500" r="3.200" fill="#0810f0"/><path d="M17 20l3-3M20 17h-2M20 17v2" stroke="#222" fill="none"/></g>
<g transform="translate(1792 318)"><use href="#Bg"/><path d="M7 18.500H29" stroke="#e00808" stroke-width="3"/><path d="M15 18.500H21" stroke="#0810f0" stroke-width="3"/></g>
<g transform="translate(1832 318)"><use href="#Bg"/><path d="M7 5V33M30 5V33" stroke="#111"/><rect x="14" y="13" width="10" height="11" fill="none" stroke="#0810f0"/><text x="19" y="22" text-anchor="middle" style="font:8px 'Liberation Sans',sans-serif;fill:#0810f0">4</text><path d="M8 18.500H14M24 18.500H30M8 18.500l3-2M8 18.500l3 2M30 18.500l-3-2M30 18.500l-3 2" stroke="#0810f0" fill="none"/></g>
<g transform="translate(1872 318)"><use href="#Bg"/><path d="M7 7H18V13H33V29H18V22H7Z" fill="#0810f0"/><circle cx="12" cy="13" r="3.500" fill="#ccc"/><circle cx="25" cy="23" r="4.500" fill="#ccc"/></g>

<g transform="translate(1752 358)"><use href="#Bg"/><path d="M8 27L19 12L29 27Z" fill="none" stroke="#e00808" stroke-width="2"/><path d="M7 27H30" stroke="#0810f0" stroke-width="3"/><path d="M19 25V18M17 20l2-2 2 2" stroke="#111" fill="none"/></g>
<g transform="translate(1792 358)"><use href="#Bg"/><path d="M6 33L18.500 7L31 33" fill="none" stroke="#e00808" stroke-width="2.200"/><path d="M8 33L18.500 22L29 33" fill="none" stroke="#0810f0" stroke-width="2.500"/><path d="M18.500 20V13M16.500 15l2-2 2 2" stroke="#111" fill="none"/></g>
<g transform="translate(1832 358)"><use href="#Bg"/><path d="M8 27L13 10H24L30 27" fill="none" stroke="#e00808" stroke-width="3"/><path d="M5 34L9 26H30L34 34" fill="none" stroke="#0810f0" stroke-width="3"/><path d="M19 22V14M17 16l2-2 2 2" stroke="#111" fill="none"/></g>
<g transform="translate(1872 358)"><use href="#Bg"/><path d="M9 26L14 10H24L30 26" fill="none" stroke="#e00808" stroke-width="3"/><path d="M0 25H38" stroke="#0810f0" stroke-width="3"/><path d="M19 21V13M17 15l2-2 2 2" stroke="#111" fill="none"/><path d="M3 22l5 6M8 22l-5 6M30 22l5 6M35 22l-5 6" stroke="#111"/></g>

<g transform="translate(1752 398)"><use href="#Bo"/><use href="#ar" x="15" y="10" /></g>
<g transform="translate(1792 398)"><use href="#Bo"/><rect x="8" y="8" width="22" height="22" fill="none" stroke="#e00808" stroke-width="2.500"/><use href="#ar" x="14" y="10"/></g>
<g transform="translate(1832 398)"><use href="#Bo"/><path d="M13 8H28L31 11V30H13L8 25V13Z" fill="none" stroke="#e00808" stroke-width="2.500"/><use href="#ar" x="15" y="10"/></g>
<g transform="translate(1872 398)"><use href="#Bo"/><path d="M7 5V20M7 28H15V15H24" fill="none" stroke="#222"/><circle cx="8" cy="20" r="2.500" fill="#e00808"/><circle cx="6" cy="28" r="2.500" fill="#0bd02c"/><circle cx="25" cy="12" r="2.500" fill="#0bd02c"/><use href="#ar" x="19" y="16"/></g>

<!-- preview -->
<rect x="1750" y="442" width="1.500" height="441" fill="#4f7a70"/>
<path d="M1905 543.500H1752V781H1905" fill="none" stroke="#1828a0" stroke-width="1.200"/>
<rect x="1755" y="632" width="150" height="127" fill="#f00"/>
<path d="M1758.300 649.300H1773.300V641H1786.700V649.300H1800.700V641H1814V649.300H1828.700V641H1842.700V649.300H1850L1851.700 646.700H1856.700L1858.300 649.300H1870V667.700H1875V726.700H1870V744.300H1858.300L1855 748.300L1851.700 744.300H1842.700V754.300H1828.700V745H1814V754.300H1800.700V745H1786.700V754.300H1772.700V745H1758.300V736.700H1761.700V718.300H1758.300V706.700H1761.700V686.700H1758.300V675H1761.700V656.700H1758.300Z" fill="none" stroke="#20e0e8" stroke-width="1.500"/>
<path d="M1761.700 656.700V675M1761.700 686.700V706.700M1761.700 718.300V736.700M1870 649.300V667.700M1775 754.300H1786.700M1851.700 748H1857" fill="none" stroke="#aaa" stroke-width="1.500"/>
<path d="M1756 751l7 7M1763 751l-7 7" stroke="#ccc" stroke-width=".8"/>
<rect x="1751" y="883" width="154" height="2" fill="#d8eee8"/><rect x="1751" y="885" width="154" height="17" fill="#55cdb0"/>
<text class="j" x="1755" y="905">X = -0.225638"</text>
</svg>
</body></html>
